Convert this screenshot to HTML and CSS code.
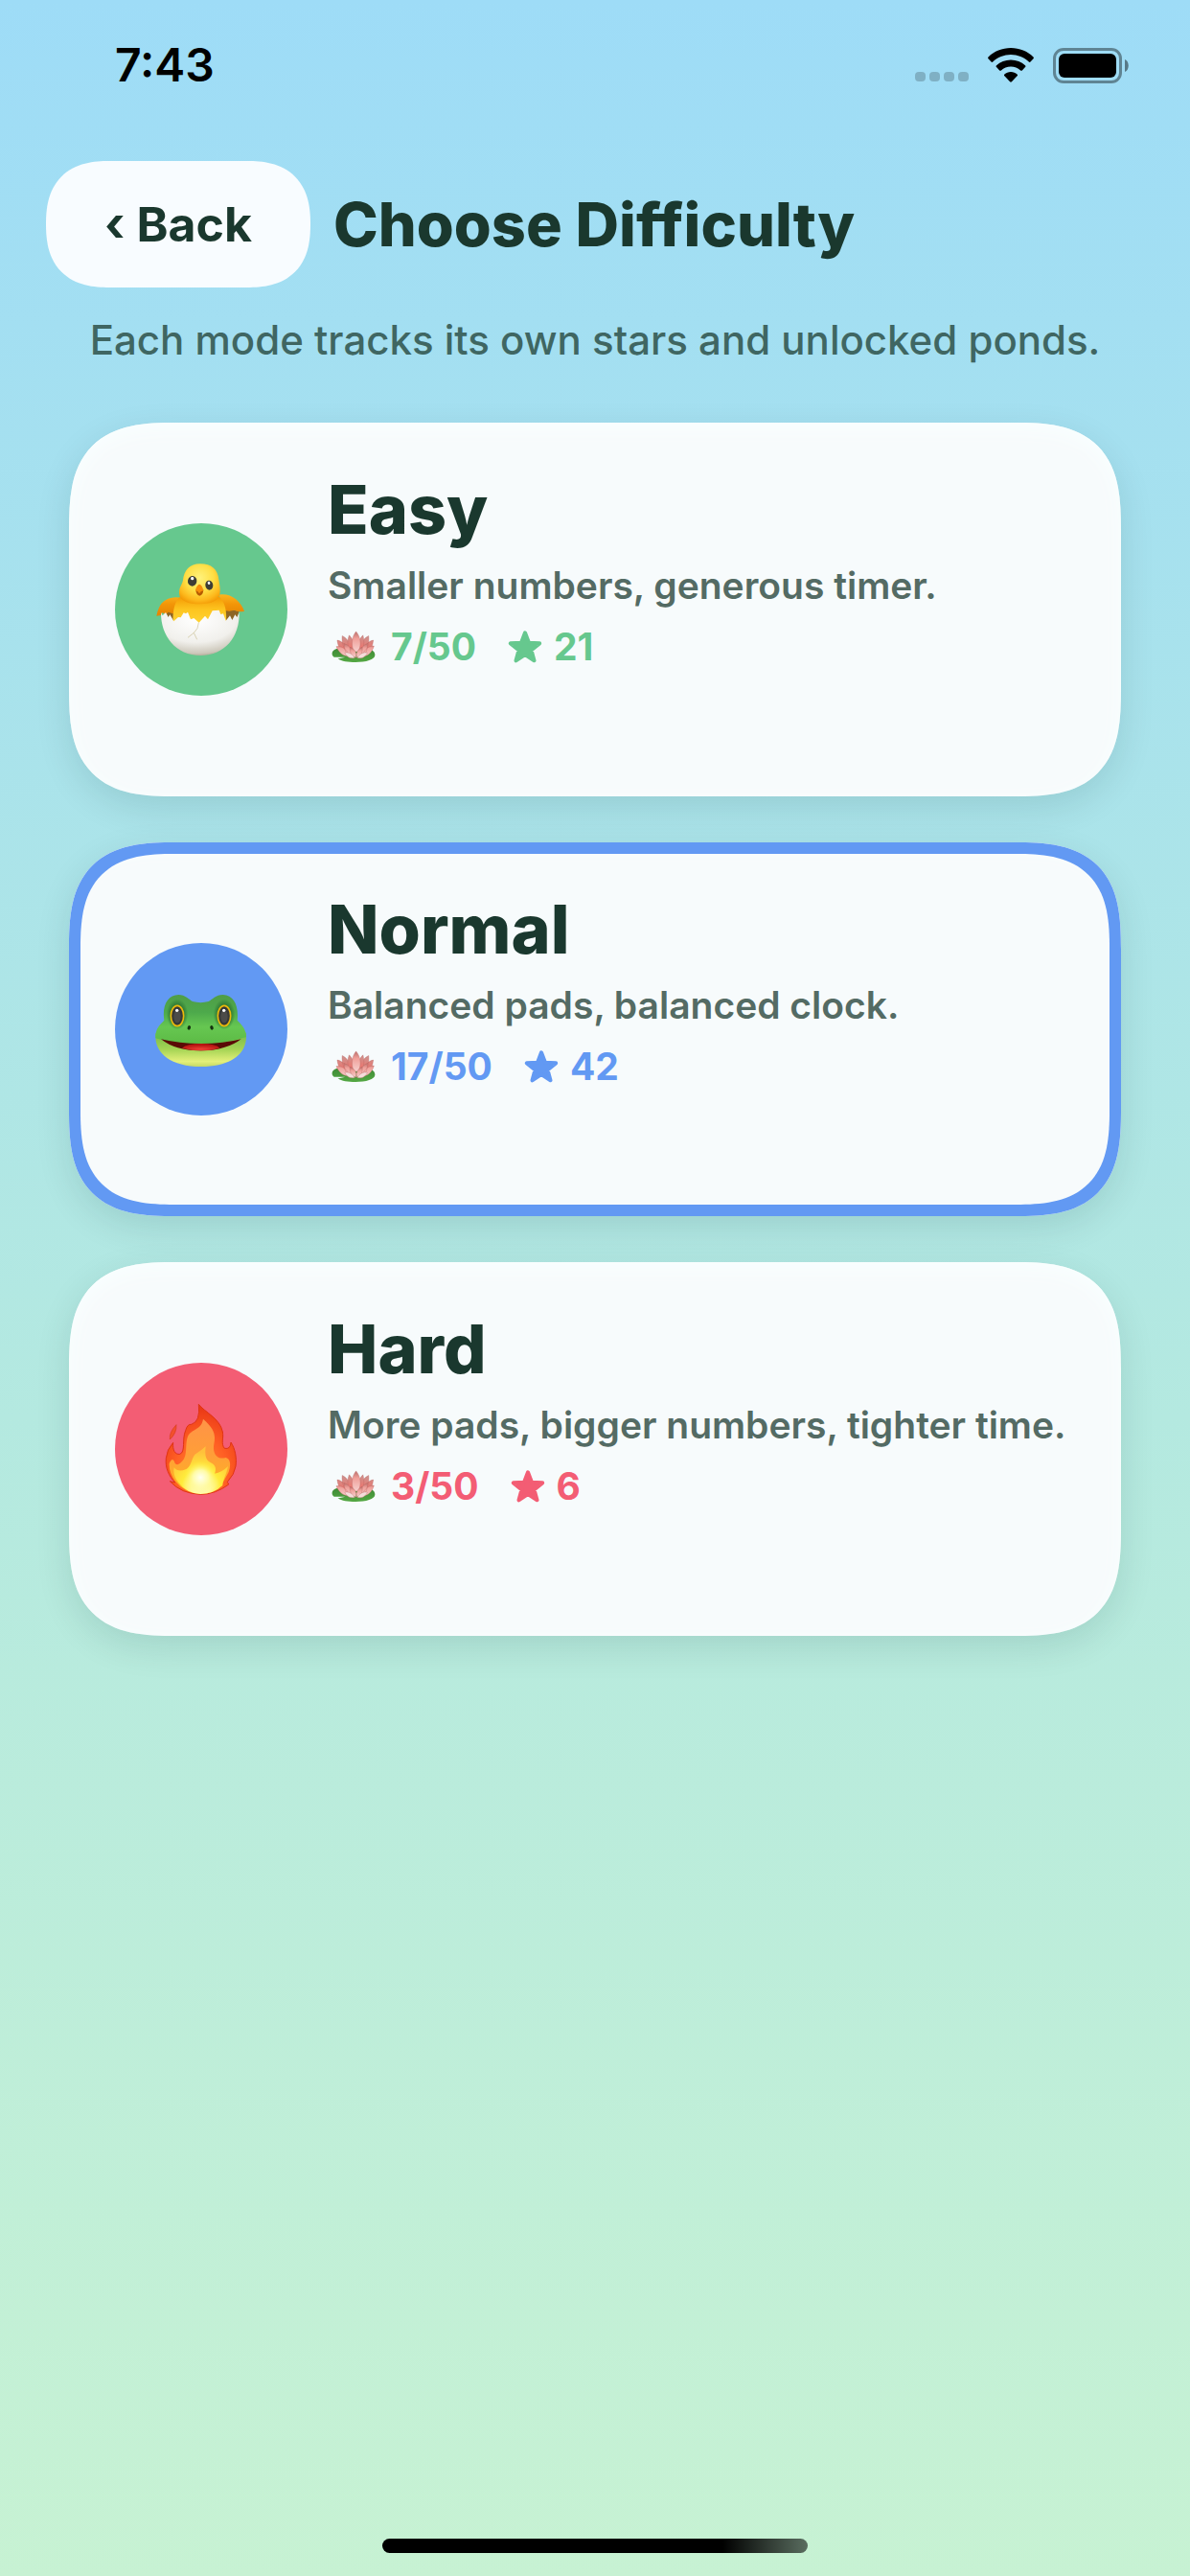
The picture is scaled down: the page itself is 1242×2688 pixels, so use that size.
FILE: index.html
```html
<!DOCTYPE html>
<html lang="en">
<head>
<meta charset="utf-8">
<meta name="viewport" content="width=device-width, initial-scale=1">
<title>Choose Difficulty</title>
<link rel="stylesheet" href="styles.css">
</head>
<body>
<svg class="defs" width="0" height="0" aria-hidden="true">
  <defs>
    <linearGradient id="petal" x1="0" y1="0" x2="0" y2="1">
      <stop offset="0" stop-color="#b9706c"/><stop offset=".35" stop-color="#f0a09a"/><stop offset="1" stop-color="#f6cfcd"/>
    </linearGradient>
    <linearGradient id="petalBack" x1="0" y1="0" x2="0" y2="1">
      <stop offset="0" stop-color="#cc938f"/><stop offset="1" stop-color="#f46e66"/>
    </linearGradient>
    <linearGradient id="pad" x1="0" y1="0" x2="0" y2="1">
      <stop offset="0" stop-color="#3d8a35"/><stop offset="1" stop-color="#55a844"/>
    </linearGradient>
    <symbol id="lotus" viewBox="34 38 140 102">
      <path fill="url(#pad)" d="M36 108C38 98 52 92 70 94L150 94C166 98 173 106 172 116C171 130 144 138 110 138C86 138 66 134 54 127L78 122L42 122C37 118 35 114 36 108Z"/>
      <g stroke="#b9605c" stroke-width="1">
        <path fill="url(#petalBack)" d="M52 68C66 70 78 80 86 104L74 112C62 102 54 86 52 68ZM167 68C153 70 142 80 134 104L146 112C158 102 165 86 167 68ZM68 54C84 62 94 76 98 102L82 108C72 92 66 74 68 54ZM152 54C136 62 126 76 122 102L138 108C150 92 154 74 152 54Z"/>
        <path fill="url(#petalBack)" d="M90 52C100 62 108 76 108 102L90 104C84 84 84 66 90 52ZM134 52C124 62 116 76 114 102L132 104C138 84 138 66 134 52Z"/>
        <path fill="url(#petal)" d="M112 40C126 58 130 78 120 104H104C96 78 98 58 112 40Z"/>
        <path fill="url(#petal)" d="M49 88C64 86 80 92 92 118C72 120 58 108 49 88ZM169 86C154 86 142 92 130 118C150 120 162 108 169 86ZM74 78C90 84 100 96 102 118L90 120C80 110 74 96 74 78ZM148 78C134 84 124 96 120 118L134 120C144 110 149 96 148 78Z"/>
        <path fill="url(#petal)" d="M92 90C106 94 114 106 114 122C100 124 92 110 92 90ZM132 90C120 94 112 106 112 122C126 124 133 110 132 90Z"/>
        <path fill="#f5dcdb" d="M76 108C88 104 102 112 108 124C92 128 82 120 76 108ZM148 108C136 104 122 112 116 124C132 128 142 120 148 108Z"/>
      </g>
    </symbol>
    <symbol id="star" viewBox="0 0 105 102">
      <path fill="currentColor" stroke="currentColor" stroke-width="12" stroke-linejoin="round" d="M52.500 7L64.500 38L98 40L72 61L81 94L52.500 75.500L24 94L33 61L7 40L40.500 38Z"/>
    </symbol>
  </defs>
</svg>

<div class="screen">
  <div class="status">
    <span class="time">7:43</span>
    <div class="status-icons">
      <svg width="56" height="12" viewBox="0 0 56 12" aria-hidden="true"><g fill="#000" fill-opacity=".2"><rect width="11" height="10" rx="4"/><rect x="15" width="11" height="10" rx="4"/><rect x="30" width="11" height="10" rx="4"/><rect x="45" width="11" height="10" rx="4"/></g></svg>
      <svg class="wifi" width="48" height="37" viewBox="0 0 48 37" aria-hidden="true"><path d="M24 0C33 0 41.500 3.500 47.500 9.500Q48.300 10.400 47.500 11.300L44.500 14.500Q43.600 15.300 42.800 14.500C37.800 9.800 31.200 7 24 7S10.200 9.800 5.200 14.500Q4.400 15.300 3.500 14.500L.5 11.300Q-.3 10.400 .5 9.500C6.500 3.500 15 0 24 0ZM24 12.500C29.800 12.500 35 14.700 39 18.300Q39.900 19.200 39 20.100L35.800 23.400Q35 24.200 34.100 23.400C31.400 21 27.900 19.600 24 19.600S16.600 21 13.900 23.400Q13 24.200 12.200 23.400L9 20.100Q8.100 19.200 9 18.300C13 14.700 18.200 12.500 24 12.500ZM24 25C26.600 25 28.900 26 30.600 27.500Q31.500 28.400 30.600 29.300L24.900 35.300Q24 36.100 23.100 35.300L17.400 29.300Q16.500 28.400 17.400 27.500C19.100 26 21.400 25 24 25Z"/></svg>
      <svg width="79" height="37" viewBox="0 0 79 37" aria-hidden="true"><rect x="1.500" y="1.500" width="69" height="34" rx="9.500" fill="none" stroke="#000" stroke-opacity=".4" stroke-width="3"/><rect x="6" y="6" width="60" height="25" rx="6"/><path d="M75 12C80 14 80 23 75 25Z" fill-opacity=".45"/></svg>
    </div>
  </div>

  <header class="header">
    <button class="back" type="button">‹ Back</button>
    <h1 class="heading">Choose Difficulty</h1>
  </header>
  <p class="intro">Each mode tracks its own stars and unlocked ponds.</p>

  <main class="modes">
    <button class="card easy" type="button">
      <span class="badge">
        <svg width="120" height="130" viewBox="0 3 360 390" role="img" aria-label="Hatching chick">
          <defs>
            <radialGradient id="chickHead" cx=".5" cy=".35" r=".68"><stop offset="0" stop-color="#fff27c"/><stop offset=".5" stop-color="#ffdf45"/><stop offset=".82" stop-color="#fdb81c"/><stop offset="1" stop-color="#f39a05"/></radialGradient>
            <linearGradient id="chickBody" x1="0" y1="0" x2="0" y2="1"><stop offset="0" stop-color="#f59a04"/><stop offset=".4" stop-color="#fdc41f"/><stop offset="1" stop-color="#ffd93a"/></linearGradient>
            <linearGradient id="wing" x1="0" y1="0" x2="0" y2="1"><stop offset="0" stop-color="#fbb51e"/><stop offset=".45" stop-color="#f39608"/><stop offset="1" stop-color="#e58200"/></linearGradient>
            <radialGradient id="shell" cx=".45" cy=".2" r=".85"><stop offset="0" stop-color="#fff"/><stop offset=".6" stop-color="#f1f0ec"/><stop offset=".88" stop-color="#cdc8bb"/><stop offset="1" stop-color="#a79a83"/></radialGradient>
          </defs>
          <path fill="#8e6524" d="M66 206L90 198L110 226L88 240ZM240 190L298 204L292 232L250 240Z"/>
          <path fill="url(#wing)" d="M122 163C92 154 60 165 48 192Q42 205 40 218L54 216L58 208L70 214L77 206L100 214ZM236 152C270 145 304 170 315 204Q294 206 284 200L268 203L248 200Z"/>
          <path fill="url(#chickBody)" d="M112 160C95 176 90 210 92 236L180 256L258 236C260 205 256 175 236 158Z"/>
          <path fill="url(#chickHead)" d="M177 55C143 55 126 77 123 106C119 125 111 127 111 147C112 172 140 181 176 181S238 170 239 145C240 130 237 118 235 105C232 72 212 55 177 55Z"/>
          <g transform="rotate(8 152 109)"><ellipse cx="152" cy="109" rx="14" ry="16" fill="#3e3d35"/><ellipse cx="151" cy="101" rx="5" ry="5" fill="#fff"/></g>
          <g transform="rotate(-8 205 122)"><ellipse cx="205" cy="122" rx="12" ry="15" fill="#3e3d35"/><ellipse cx="205" cy="115" rx="4" ry="5" fill="#fff"/></g>
          <path fill="#b65b00" d="M163 136Q164 154 175 155Q186 153 187 136Z"/><path fill="#f78e0a" d="M174 119C168 120 162 133 162 140Q168 137 174 148Q180 137 187 140C186 130 181 120 174 119Z"/>
          <path fill="url(#shell)" d="M54 207L59 217L69 207L77 222L82 214L94 235L108 222L116 223L125 208L132 211L138 206L147 229L157 225L173 239L192 218L201 229L215 202L236 200L241 213L249 211L257 233L270 217L277 231L286 214L292 222L299 207C301 282 255 342 178 342S53 281 54 207Z"/>
          <path d="M172 239L168 257L157 271L138 286M157 271L167 292" fill="none" stroke="#c8bf94" stroke-width="2"/>
        </svg>
      </span>
      <span class="info">
        <span class="name">Easy</span>
        <span class="desc">Smaller numbers, generous timer.</span>
        <span class="stats"><svg class="lotus" width="46" height="34" aria-hidden="true"><use href="#lotus"/></svg><span class="ponds">7/50</span><svg class="star" width="36" height="34" aria-hidden="true"><use href="#star"/></svg><span>21</span></span>
      </span>
    </button>

    <button class="card normal selected" type="button" aria-pressed="true">
      <span class="badge">
        <svg width="120" height="130" viewBox="0 -3 360 390" role="img" aria-label="Frog">
          <defs>
            <linearGradient id="frogFace" x1="0" y1="0" x2="0" y2="1"><stop offset="0" stop-color="#4f9d47"/><stop offset=".35" stop-color="#4da94b"/><stop offset=".65" stop-color="#66c751"/><stop offset="1" stop-color="#5cba45"/></linearGradient>
            <linearGradient id="frogJaw" x1="0" y1="0" x2="0" y2="1"><stop offset="0" stop-color="#72b846"/><stop offset=".5" stop-color="#a5d455"/><stop offset=".85" stop-color="#e4f07a"/><stop offset="1" stop-color="#c6da65"/></linearGradient>
            <radialGradient id="frogEye"><stop offset="0" stop-color="#2f7b36"/><stop offset=".65" stop-color="#347f37"/><stop offset="1" stop-color="#347f37" stop-opacity="0"/></radialGradient>
            <radialGradient id="tongue" cx=".5" cy=".8" r=".6"><stop offset="0" stop-color="#ef4337"/><stop offset="1" stop-color="#b71612"/></radialGradient>
          </defs>
          <path fill="url(#frogJaw)" d="M38 204C30 260 78 309 180 309S328 260 320 204Q316 196 300 210H60Z"/>
          <path fill="url(#frogFace)" d="M64 164C57 118 75 84 109 84C130 84 142 99 153 105Q178 112 203 105C215 99 225 84 248 84C283 85 298 120 293 164C309 180 320 192 321 216Q260 238 180 239T37 220C36 192 48 180 64 164Z"/>
          <ellipse cx="105" cy="145" rx="34" ry="48" fill="url(#frogEye)"/><ellipse cx="252" cy="145" rx="34" ry="48" fill="url(#frogEye)"/>
          <ellipse cx="105" cy="150" rx="20" ry="32" fill="#363837" stroke="#eab90b" stroke-width="5"/><ellipse cx="252" cy="150" rx="20" ry="32" fill="#363837" stroke="#eab90b" stroke-width="5"/>
          <ellipse cx="105" cy="152" rx="11" ry="20" fill="#4b4b49"/><ellipse cx="252" cy="152" rx="11" ry="20" fill="#4b4b49"/>
          <circle cx="104" cy="133" r="5" fill="#fff"/><circle cx="251" cy="133" r="5" fill="#fff"/>
          <ellipse cx="142" cy="187" rx="5" ry="7" transform="rotate(20 142 187)" fill="#14320f"/><ellipse cx="213" cy="187" rx="5" ry="7" transform="rotate(-20 213 187)" fill="#14320f"/>
          <path fill="#5a0a06" d="M54 223Q110 237 180 237T305 223Q260 258 180 259T54 223Z"/>
          <path fill="url(#tongue)" d="M120 251Q134 237 180 237T238 251Q212 259 180 259T120 251Z"/>
        </svg>
      </span>
      <span class="info">
        <span class="name">Normal</span>
        <span class="desc">Balanced pads, balanced clock.</span>
        <span class="stats"><svg class="lotus" width="46" height="34" aria-hidden="true"><use href="#lotus"/></svg><span class="ponds">17/50</span><svg class="star" width="36" height="34" aria-hidden="true"><use href="#star"/></svg><span>42</span></span>
      </span>
    </button>

    <button class="card hard" type="button">
      <span class="badge">
        <svg width="120" height="130" viewBox="0 -9 360 390" role="img" aria-label="Fire">
          <defs>
            <radialGradient id="fireOuter" cx=".5" cy=".75" r=".75"><stop offset="0" stop-color="#ff8a2d"/><stop offset=".5" stop-color="#ff5f24"/><stop offset="1" stop-color="#e83414"/></radialGradient>
            <linearGradient id="fireMid" x1="0" y1="0" x2="0" y2="1"><stop offset="0" stop-color="#ff9347"/><stop offset=".5" stop-color="#ff9f37"/><stop offset="1" stop-color="#ffb81c"/></linearGradient>
            <radialGradient id="fireCore" cx=".5" cy=".82" r=".7"><stop offset="0" stop-color="#fffff0"/><stop offset=".25" stop-color="#fffcb0"/><stop offset=".5" stop-color="#ffec3b"/><stop offset="1" stop-color="#ffc13b"/></radialGradient>
            <radialGradient id="fireGlow"><stop offset="0" stop-color="#fffff0"/><stop offset=".45" stop-color="#fffcae" stop-opacity=".9"/><stop offset="1" stop-color="#fff03a" stop-opacity="0"/></radialGradient>
          </defs>
          <path fill="#f2502c" stroke="#d63c1b" stroke-width="2" d="M102 110Q104 136 82 156Q79 134 102 110Z"/>
          <path fill="url(#fireOuter)" stroke="#df3414" stroke-width="3" d="M172 46C190 70 239 90 247 132C251 153 241 169 253 184Q272 188 273 165C286 184 292 215 288 240Q284 266 262 289L266 297Q224 328 178 328Q117 326 82 287L98 291C78 270 67 244 70 215Q72 188 92 166C90 190 98 204 113 202C132 196 119 155 131 128Q137 107 149 109Q178 101 172 46Z"/>
          <path fill="url(#fireMid)" d="M186 92C220 122 226 140 220 170C214 202 232 221 257 213Q278 220 266 258L242 302Q218 326 178 327Q128 324 100 288Q78 260 80 231Q91 207 98 231Q108 240 119 226C141 207 126 166 141 141C156 122 181 124 186 92Z"/>
          <path fill="url(#fireCore)" d="M194 178C190 210 196 224 213 230Q231 240 222 263Q244 260 264 240C258 270 248 280 247 300Q220 326 178 327Q133 324 108 290Q90 267 95 244Q108 260 131 250C149 243 150 214 160 203Q182 190 194 178Z"/>
          <ellipse cx="178" cy="275" rx="52" ry="52" fill="url(#fireGlow)"/>
        </svg>
      </span>
      <span class="info">
        <span class="name">Hard</span>
        <span class="desc">More pads, bigger numbers, tighter time.</span>
        <span class="stats"><svg class="lotus" width="46" height="34" aria-hidden="true"><use href="#lotus"/></svg><span class="ponds">3/50</span><svg class="star" width="36" height="34" aria-hidden="true"><use href="#star"/></svg><span>6</span></span>
      </span>
    </button>
  </main>

  <div class="home-indicator"></div>
</div>
</body>
</html>
```
FILE: styles.css
```css
* {
  box-sizing: border-box;
}

body {
  margin: 0;
  font-family: Inter, "Liberation Sans", sans-serif;
  color: #1a382e;
}

button {
  margin: 0;
  border: 0;
  font: inherit;
  color: inherit;
  text-align: left;
  cursor: pointer;
}

.defs {
  position: absolute;
}

.screen {
  display: flex;
  flex-direction: column;
  min-height: 100vh;
  padding-bottom: 24px;
  background: linear-gradient(#9edcf7, #b4e9e0 55%, #c7f2d3);
}

.status {
  display: flex;
  justify-content: space-between;
  align-items: center;
  height: 136px;
  padding: 0 64px 0 120px;
}

.time {
  font-size: 48px;
  line-height: 56px;
  font-weight: 600;
  color: #000;
}

.status-icons {
  display: flex;
  align-items: flex-end;
  gap: 20px;
}

.header {
  display: flex;
  align-items: center;
  gap: 24px;
  margin-top: 32px;
  padding: 0 48px;
}

.back {
  height: 132px;
  padding: 0 61px;
  border-radius: 60px;
  background: #f8fcff;
  font-size: 50px;
  font-weight: 700;
  white-space: nowrap;
}

.heading {
  margin: 0;
  font-size: 63px;
  line-height: 78px;
  font-weight: 800;
}

.intro {
  margin: 30px 48px 0;
  font-size: 42px;
  line-height: 50px;
  font-weight: 550;
  text-align: center;
  color: #3f6662;
}

.modes {
  display: flex;
  flex-direction: column;
  gap: 48px;
  margin: 61px 72px 96px;
}

.card {
  display: flex;
  align-items: stretch;
  gap: 42px;
  min-height: 390px;
  padding: 48px 24px 48px 48px;
  border-radius: 84px;
  background: #f7fbfc;
  box-shadow: 0 12px 36px rgba(0, 50, 50, .12), inset 0 6px 24px #f9ffff;
}

.selected {
  outline: 12px solid #6299f3;
  outline-offset: -12px;
}

@supports (corner-shape: squircle) {
  .card {
    border-radius: 112px;
    corner-shape: superellipse(1.5);
  }

  .back {
    border-radius: 66px;
    corner-shape: superellipse(1.3);
  }
}

.badge {
  display: flex;
  align-self: center;
  align-items: center;
  justify-content: center;
  flex: none;
  width: 180px;
  height: 180px;
  border-radius: 50%;
  background: var(--accent);
}

.easy {
  --accent: #66c88e;
}

.normal {
  --accent: #6299f3;
}

.hard {
  --accent: #f35d74;
}

.info {
  display: flex;
  flex-direction: column;
}

.name {
  margin-bottom: 12px;
  font-size: 70px;
  line-height: 86px;
  font-weight: 800;
}

.desc {
  margin-bottom: 16px;
  font-size: 39px;
  line-height: 48px;
  font-weight: 600;
  color: #546b64;
}

.stats {
  display: flex;
  align-items: center;
  font-size: 39px;
  line-height: 48px;
  font-weight: 700;
  color: var(--accent);
}

.lotus {
  margin: 0 16px 0 4px;
}

.star {
  margin: 0 12px 0 33px;
}

.home-indicator {
  width: 444px;
  height: 15px;
  margin: auto auto 0;
  border-radius: 8px;
  background: linear-gradient(90deg, #000 80%, rgba(0, 0, 0, .55));
}
```
